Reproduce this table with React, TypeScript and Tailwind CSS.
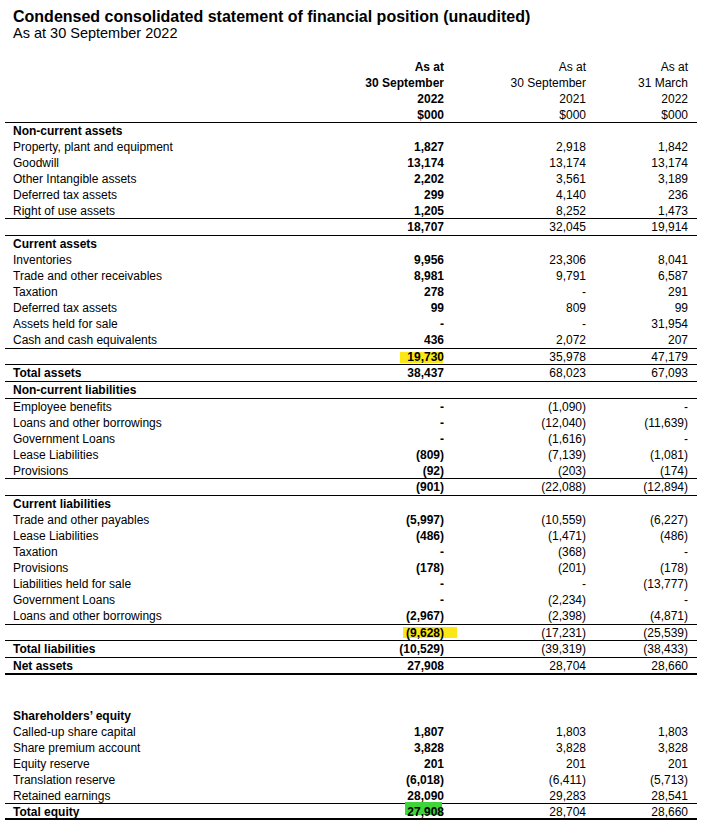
type Row = {
  label?: string;
  bold?: boolean;
  values?: [string, string, string];
  line?: "thin" | "thick";
  h?: number;
  mark?: "yellow" | "yellowWide" | "green";
  spacer?: number;
};

const rows: Row[] = [
  { label: "Non-current assets", bold: true },
  { label: "Property, plant and equipment", values: ["1,827", "2,918", "1,842"] },
  { label: "Goodwill", values: ["13,174", "13,174", "13,174"] },
  { label: "Other Intangible assets", values: ["2,202", "3,561", "3,189"] },
  { label: "Deferred tax assets", values: ["299", "4,140", "236"] },
  { label: "Right of use assets", values: ["1,205", "8,252", "1,473"], line: "thin" },
  { values: ["18,707", "32,045", "19,914"], line: "thin", h: 17 },
  { label: "Current assets", bold: true },
  { label: "Inventories", values: ["9,956", "23,306", "8,041"] },
  { label: "Trade and other receivables", values: ["8,981", "9,791", "6,587"] },
  { label: "Taxation", values: ["278", "-", "291"] },
  { label: "Deferred tax assets", values: ["99", "809", "99"] },
  { label: "Assets held for sale", values: ["-", "-", "31,954"] },
  { label: "Cash and cash equivalents", values: ["436", "2,072", "207"], line: "thin", h: 17 },
  { values: ["19,730", "35,978", "47,179"], line: "thin", mark: "yellow" },
  { label: "Total assets", bold: true, values: ["38,437", "68,023", "67,093"], line: "thin", h: 17 },
  { label: "Non-current liabilities", bold: true, line: "thin", h: 17 },
  { label: "Employee benefits", values: ["-", "(1,090)", "-"] },
  { label: "Loans and other borrowings", values: ["-", "(12,040)", "(11,639)"] },
  { label: "Government Loans", values: ["-", "(1,616)", "-"] },
  { label: "Lease Liabilities", values: ["(809)", "(7,139)", "(1,081)"] },
  { label: "Provisions", values: ["(92)", "(203)", "(174)"], line: "thin" },
  { values: ["(901)", "(22,088)", "(12,894)"], line: "thin", h: 17 },
  { label: "Current liabilities", bold: true },
  { label: "Trade and other payables", values: ["(5,997)", "(10,559)", "(6,227)"] },
  { label: "Lease Liabilities", values: ["(486)", "(1,471)", "(486)"] },
  { label: "Taxation", values: ["-", "(368)", "-"] },
  { label: "Provisions", values: ["(178)", "(201)", "(178)"] },
  { label: "Liabilities held for sale", values: ["-", "-", "(13,777)"] },
  { label: "Government Loans", values: ["-", "(2,234)", "-"] },
  { label: "Loans and other borrowings", values: ["(2,967)", "(2,398)", "(4,871)"], line: "thin", h: 17 },
  { values: ["(9,628)", "(17,231)", "(25,539)"], line: "thin", mark: "yellowWide" },
  { label: "Total liabilities", bold: true, values: ["(10,529)", "(39,319)", "(38,433)"], line: "thin", h: 17 },
  { label: "Net assets", bold: true, values: ["27,908", "28,704", "28,660"], line: "thick", h: 17 },
  { spacer: 33 },
  { label: "Shareholders\u2019 equity", bold: true },
  { label: "Called-up share capital", values: ["1,807", "1,803", "1,803"] },
  { label: "Share premium account", values: ["3,828", "3,828", "3,828"] },
  { label: "Equity reserve", values: ["201", "201", "201"] },
  { label: "Translation reserve", values: ["(6,018)", "(6,411)", "(5,713)"] },
  { label: "Retained earnings", values: ["28,090", "29,283", "28,541"], line: "thin" },
  { label: "Total equity", bold: true, values: ["27,908", "28,704", "28,660"], line: "thick", mark: "green" },
];

const grid = "grid grid-cols-[331px_100px_142px_102px] pl-[8px] pr-[9px] leading-[16px]";

function Marked({ text, mark }: { text: string; mark?: Row["mark"] }) {
  if (!mark) return <>{text}</>;
  return (
    <span className="relative inline-block">
      {mark === "yellow" && <span className="absolute left-[-7px] right-[1px] top-[3px] h-[11px] bg-[#fbe716]" />}
      {mark === "yellowWide" && <span className="absolute left-[-3px] right-[-13px] top-[2px] h-[11px] bg-[#fbe716]" />}
      {mark === "green" && <span className="absolute left-[-2px] right-[2px] top-[-2px] h-[13px] bg-[#3fd43a]" />}
      <span className="relative">{text}</span>
    </span>
  );
}

function StatementRow({ row }: { row: Row }) {
  if (row.spacer) return <div style={{ height: row.spacer }} />;
  const border =
    row.line === "thick" ? "border-b-2 border-black" : row.line === "thin" ? "border-b border-black" : "";
  const height = row.h === 17 ? "h-[17px]" : "h-[16px]";
  return (
    <div className={`${grid} ${height} ${border}`}>
      <div className={row.bold ? "font-bold" : ""}>{row.label}</div>
      {row.values ? (
        <>
          <div className="text-right font-bold">
            <Marked text={row.values[0]} mark={row.mark} />
          </div>
          <div className="text-right">{row.values[1]}</div>
          <div className="text-right">{row.values[2]}</div>
        </>
      ) : null}
    </div>
  );
}

export default function App() {
  return (
    <div className="min-h-[827px] w-[707px] bg-white text-black font-['Liberation_Sans',Arial,sans-serif] text-[12px]">
      <div className="h-[59px] pl-[13px] pt-[8px]">
        <div className="text-[16px] font-bold leading-[17px]">
          Condensed consolidated statement of financial position (unaudited)
        </div>
        <div className="text-[14.5px] leading-[17px]">As at 30 September 2022</div>
      </div>

      <div className="ml-[5px] w-[692px]">
        <div className={`${grid} h-[16px]`}>
          <div />
          <div className="text-right font-bold">As at</div>
          <div className="text-right">As at</div>
          <div className="text-right">As at</div>
        </div>
        <div className={`${grid} h-[16px]`}>
          <div />
          <div className="text-right font-bold">30 September</div>
          <div className="text-right">30 September</div>
          <div className="text-right">31 March</div>
        </div>
        <div className={`${grid} h-[16px]`}>
          <div />
          <div className="text-right font-bold">2022</div>
          <div className="text-right">2021</div>
          <div className="text-right">2022</div>
        </div>
        <div className={`${grid} h-[16px] border-b border-black`}>
          <div />
          <div className="text-right font-bold">$000</div>
          <div className="text-right">$000</div>
          <div className="text-right">$000</div>
        </div>

        {rows.map((row, i) => (
          <StatementRow key={i} row={row} />
        ))}
      </div>
    </div>
  );
}
